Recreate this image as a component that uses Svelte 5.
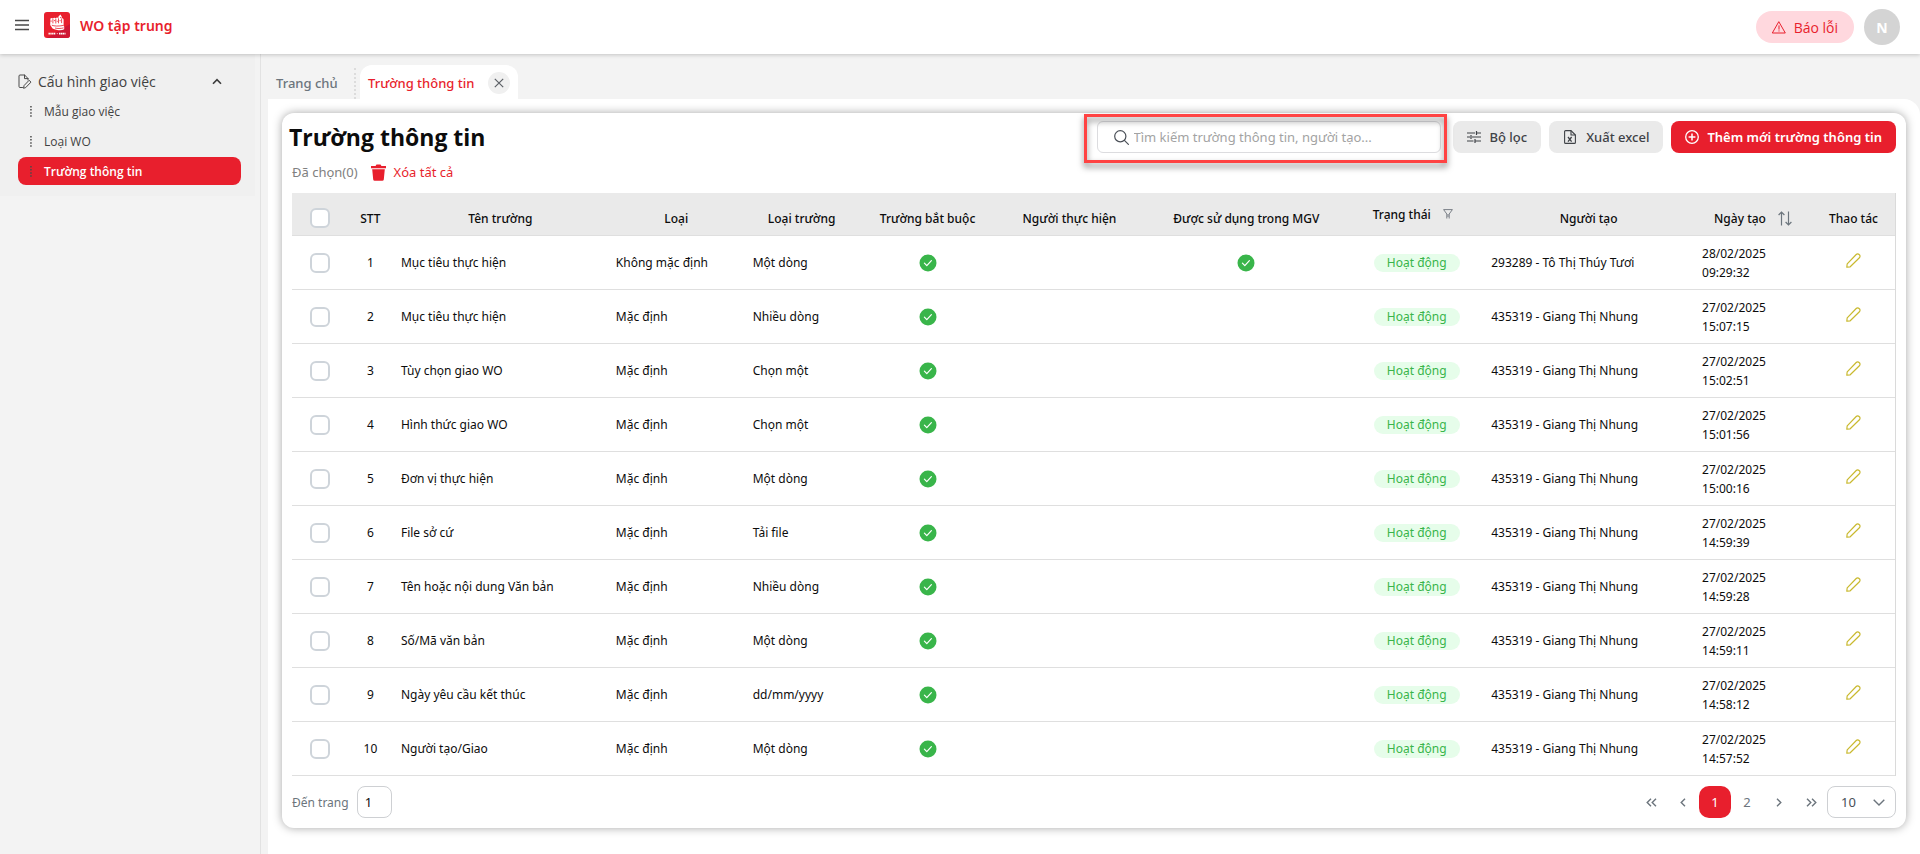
<script>
  const menu = [
    { label: 'Mẫu giao việc', active: false },
    { label: 'Loại WO', active: false },
    { label: 'Trường thông tin', active: true }
  ];

  const columns = [
    { key: 'check', label: '', width: 56 },
    { key: 'no', label: 'STT', width: 45 },
    { key: 'name', label: 'Tên trường', width: 215 },
    { key: 'kind', label: 'Loại', width: 137 },
    { key: 'type', label: 'Loại trường', width: 114 },
    { key: 'required', label: 'Trường bắt buộc', width: 138 },
    { key: 'performer', label: 'Người thực hiện', width: 146 },
    { key: 'used', label: 'Được sử dụng trong MGV', width: 208 },
    { key: 'status', label: 'Trạng thái', width: 133 },
    { key: 'creator', label: 'Người tạo', width: 211 },
    { key: 'created', label: 'Ngày tạo', width: 118 },
    { key: 'action', label: 'Thao tác', width: 83 }
  ];
  const total = columns.reduce((sum, c) => sum + c.width, 0);

  const nhung = '435319 - Giang Thị Nhung';
  const rows = [
    ['Mục tiêu thực hiện', 'Không mặc định', 'Một dòng', '293289 - Tô Thị Thúy Tươi', '28/02/2025', '09:29:32', true],
    ['Mục tiêu thực hiện', 'Mặc định', 'Nhiều dòng', nhung, '27/02/2025', '15:07:15', false],
    ['Tùy chọn giao WO', 'Mặc định', 'Chọn một', nhung, '27/02/2025', '15:02:51', false],
    ['Hình thức giao WO', 'Mặc định', 'Chọn một', nhung, '27/02/2025', '15:01:56', false],
    ['Đơn vị thực hiện', 'Mặc định', 'Một dòng', nhung, '27/02/2025', '15:00:16', false],
    ['File sở cứ', 'Mặc định', 'Tải file', nhung, '27/02/2025', '14:59:39', false],
    ['Tên hoặc nội dung Văn bản', 'Mặc định', 'Nhiều dòng', nhung, '27/02/2025', '14:59:28', false],
    ['Số/Mã văn bản', 'Mặc định', 'Một dòng', nhung, '27/02/2025', '14:59:11', false],
    ['Ngày yêu cầu kết thúc', 'Mặc định', 'dd/mm/yyyy', nhung, '27/02/2025', '14:58:12', false],
    ['Người tạo/Giao', 'Mặc định', 'Một dòng', nhung, '27/02/2025', '14:57:52', false]
  ].map(([name, kind, type, creator, date, time, used], i) => ({ no: i + 1, name, kind, type, creator, date, time, used }));

  let search = $state('');
  let page = $state('1');
  let size = $state('10');
</script>

{#snippet tick()}
  <svg class="tick" viewBox="0 0 18 18" width="18" height="18" role="img" aria-label="Có">
    <circle cx="9" cy="9" r="8.5" fill="#39b54a" />
    <path d="M5.4 9.2l2.4 2.4 4.6-5" fill="none" stroke="#fff" stroke-width="1.2" stroke-linecap="round" stroke-linejoin="round" />
  </svg>
{/snippet}

<header class="topbar">
  <button class="plain burger" aria-label="Menu">
    <svg viewBox="0 0 14 12" width="14" height="12"><path d="M0 1.5h14M0 6h14M0 10.5h14" stroke="#4a4a4a" stroke-width="1.3" /></svg>
  </button>
  <svg class="logo" viewBox="0 0 26 26" width="26" height="26" aria-hidden="true">
    <rect width="26" height="26" rx="3" fill="#e81f2d" />
    <path d="M26 12v11a3 3 0 0 1-3 3H3z" fill="#cf1633" />
    <path d="M6.400 6.600c.8-1 2-.8 2.500-.2.6-1 2.200-1 2.800-.1.700-1 2-.9 2.600-.2l.2-1.600L16.400 2.600l1.300 1.900v1.700c1-.2 1.900.4 1.900 1.500v6.100l.6.900v2.500c-1.800 1-4.400 1.300-7 .7-2.800-.3-4.700-.9-5.300-2.300L6.200 13z" fill="#fff" />
    <path d="M8.900 6.800v4.600M11.800 6.600v4.900M14.500 6.300v5M17.600 6.500v4.600M6.400 9.100h1.400M10 8.600h1.200M12.800 9.300h1M16 5.600h1M15.500 8.700h1.200M7.800 13.200c2.400 1 6.600 1.200 11.800.2M11 16c2.600.7 5.300.7 8.600-.1" fill="none" stroke="#e81f2d" stroke-width=".8" />
    <path d="M4.500 21.600h7.200M15 21.600h6.500" stroke="#fff" stroke-width="1.600" stroke-dasharray="1.400 .4" />
    <path d="M12.800 21.600h1" stroke="#fff" stroke-width=".8" />
  </svg>
  <span class="brand">WO tập trung</span>
  <button class="report">
    <svg viewBox="0 0 14 13" width="14" height="13" fill="none" stroke="#e81f2d" stroke-linejoin="round" stroke-linecap="round"><path d="M7 1L13.3 12H.7z" /><path d="M7 4.8v3.4M7 9.8v.3" /></svg>
    Báo lỗi
  </button>
  <span class="avatar">N</span>
</header>

<div class="shell">
  <nav class="sidebar">
    <div class="group">
      <button class="plain group-title">
        <svg viewBox="0 0 14 15" width="14" height="15" fill="none" stroke="#4a4a4a" stroke-linejoin="round" stroke-linecap="round"><path d="M4.500 13.500H2a1 1 0 0 1-1-1V2a1 1 0 0 1 1-1h4.600L10 4.500V6" /><path d="M6.500 1v3.600H10" /><path d="M5.600 13.900l.5-2.400 5-5.200 1.900 1.800-5 5.200z" /></svg>
        <span>Cấu hình giao việc</span>
        <svg viewBox="0 0 10 7" width="10" height="7" fill="none" stroke="#3c3c3c" stroke-width="1.6"><path d="M1 5.800L5 1.600l4 4.200" /></svg>
      </button>
      <ul>
        {#each menu as item}
          <li>
            <a href="#menu" class:active={item.active}>
              <svg viewBox="0 0 2 11" width="2" height="11" fill="#4a4a4a"><path d="M.2 0h1.500v1.500H.2zM.2 3.100h1.500v1.500H.2zM.2 6.200h1.500v1.500H.2zM.2 9.300h1.500v1.500H.2z" /></svg>
              <span>{item.label}</span>
            </a>
          </li>
        {/each}
      </ul>
    </div>
  </nav>

  <div class="main">
    <div class="tabs">
      <a class="tab home" href="#home">Trang chủ</a>
      <div class="tab current">
        <a href="#fields">Trường thông tin</a>
        <button class="plain close" aria-label="Đóng">
          <svg viewBox="0 0 10 10" width="10" height="10"><path d="M.8.8l8.400 8.400M9.200.8L.8 9.200" stroke="#5c6066" stroke-width="1.200" /></svg>
        </button>
      </div>
    </div>

    <main class="content">
      <section class="card">
        <div class="head">
          <h1>Trường thông tin</h1>
          <div class="actions">
            <div class="search">
              <label for="search" aria-label="Tìm kiếm">
                <svg viewBox="0 0 15 15" width="15" height="15" fill="none" stroke="#4a4f57" stroke-width="1.200" stroke-linecap="round"><circle cx="6.300" cy="6.300" r="5.600" /><path d="M10.400 10.400l4 4" /></svg>
              </label>
              <input id="search" type="text" placeholder="Tìm kiếm trường thông tin, người tạo..." bind:value={search} />
              <div class="mark"></div>
            </div>
            <button class="btn">
              <svg viewBox="0 0 14 12" width="14" height="12" fill="none" stroke="#3f4247" stroke-width="1.200"><path d="M0 2h8M10 2h4M0 6h3M5 6h9M0 10h6.500M8.500 10h5.500M9.500 0v4M4 4v4M8 8v4" /></svg>
              Bộ lọc
            </button>
            <button class="btn">
              <svg viewBox="-1 0 14 14" width="14" height="14" fill="none" stroke="#3f4247" stroke-width="1.100" stroke-linejoin="round"><path d="M1.600.6h5.400l4.400 4.400v7.400a1 1 0 0 1-1 1H1.600a1 1 0 0 1-1-1V1.600a1 1 0 0 1 1-1z" /><path d="M7 .6V5h4.400" /><path d="M4 7l3.600 4.600M7.600 7L4 11.600" stroke-width="1.300" /></svg>
              Xuất excel
            </button>
            <button class="btn primary">
              <svg viewBox="0 0 14 14" width="14" height="14" fill="none" stroke="#fff" stroke-width="1.300"><circle cx="7" cy="7" r="6.300" /><path d="M7 3.600v6.800M3.600 7h6.800" stroke-width="1.500" /></svg>
              Thêm mới trường thông tin
            </button>
          </div>
        </div>

        <div class="selection">
          <span>Đã chọn(0)</span>
          <button class="plain clear">
            <svg viewBox="0 0 15 17" width="15" height="17" fill="#e81f2d"><path d="M0 2h4.500L5.500.4h4L10.500 2H15v2.200H0z" /><path d="M1.200 5.200h12.600l-1 10.300a1.500 1.500 0 0 1-1.500 1.300H3.700a1.500 1.500 0 0 1-1.500-1.300z" /></svg>
            Xóa tất cả
          </button>
        </div>

        <table>
          <colgroup>
            {#each columns as c}<col style="width: {(c.width / total) * 100}%" />{/each}
          </colgroup>
          <thead>
            <tr>
              {#each columns as c}
                <th scope="col" class={c.key}>
                  {#if c.key === 'check'}
                    <input type="checkbox" aria-label="Chọn tất cả" />
                  {:else if c.key === 'status'}
                    <span class="with-icon">{c.label}
                      <svg viewBox="0 0 10 10" width="10" height="10" fill="none" stroke="#7a7f87" stroke-linejoin="round"><path d="M.6.6h8.800L6.200 5v4.500M.6.6L3.800 5v4.500M5 5v3" /></svg>
                    </span>
                  {:else if c.key === 'created'}
                    <span class="with-icon">{c.label}
                      <svg viewBox="0 0 14 15" width="14" height="15" fill="none" stroke="#6c757d" stroke-width="1.200"><path d="M3.500 14.500V1M.6 4L3.500 1l2.900 3M10.500.5V14M7.600 11l2.900 3 2.900-3" /></svg>
                    </span>
                  {:else}
                    {c.label}
                  {/if}
                </th>
              {/each}
            </tr>
          </thead>
          <tbody>
            {#each rows as r}
              <tr>
                <td class="mid"><input type="checkbox" aria-label="Chọn dòng {r.no}" /></td>
                <td class="mid">{r.no}</td>
                <td>{r.name}</td>
                <td>{r.kind}</td>
                <td>{r.type}</td>
                <td class="mid">{@render tick()}</td>
                <td></td>
                <td class="mid">{#if r.used}{@render tick()}{/if}</td>
                <td class="mid"><span class="badge">Hoạt động</span></td>
                <td>{r.creator}</td>
                <td>{r.date}<br />{r.time}</td>
                <td class="mid">
                  <button class="plain" aria-label="Sửa">
                    <svg viewBox="0 0 15 15" width="15" height="15" fill="none" stroke="#c9b92f" stroke-width="1.200" stroke-linejoin="round"><path d="M.8 14.200l.4-3.400 9-9.300a2 2 0 0 1 2.900 0l.3.300a2 2 0 0 1 0 2.900l-9.200 9.100z" /></svg>
                  </button>
                </td>
              </tr>
            {/each}
          </tbody>
        </table>

        <div class="foot">
          <label for="page">Đến trang</label>
          <input id="page" type="text" bind:value={page} />
          <div class="pager">
            <button class="plain" aria-label="Trang đầu"><svg viewBox="0 0 11 9" width="11" height="9"><path d="M5 .7L1.200 4.500 5 8.300M10 .7L6.200 4.500 10 8.300" /></svg></button>
            <button class="plain" aria-label="Trang trước"><svg viewBox="0 0 6 9" width="6" height="9"><path d="M5 .7L1.200 4.500 5 8.300" /></svg></button>
            <button class="plain on">1</button>
            <button class="plain">2</button>
            <button class="plain" aria-label="Trang sau"><svg viewBox="0 0 6 9" width="6" height="9"><path d="M1 .7l3.800 3.800L1 8.300" /></svg></button>
            <button class="plain" aria-label="Trang cuối"><svg viewBox="0 0 11 9" width="11" height="9"><path d="M1 .7l3.800 3.800L1 8.300M6 .7l3.800 3.800L6 8.300" /></svg></button>
          </div>
          <div class="size">
            <select aria-label="Số dòng mỗi trang" bind:value={size}>
              <option>10</option>
              <option>20</option>
            </select>
            <svg viewBox="0 0 12 7" width="12" height="7"><path d="M.7.7L6 6 11.300.7" /></svg>
          </div>
        </div>
      </section>
    </main>
  </div>
</div>

<style>
  :global(body) {
    margin: 0;
    background: #f3f3f3;
  }
  :global(#app) {
    min-height: 100vh;
    display: flex;
    flex-direction: column;
    font-family: 'Noto Sans', 'Open Sans', sans-serif;
    font-size: 13px;
    line-height: 19px;
    color: #0c0c0c;
  }
  * {
    box-sizing: border-box;
  }
  button, input, select {
    font: inherit;
    color: inherit;
    margin: 0;
  }
  button {
    cursor: pointer;
  }
  a {
    color: inherit;
    text-decoration: none;
  }
  svg {
    flex: none;
    display: block;
  }
  .plain {
    border: 0;
    padding: 0;
    background: none;
  }

  .topbar {
    display: flex;
    align-items: center;
    height: 54px;
    padding: 0 20px 0 15px;
    background: #fff;
    box-shadow: 0 1px 4px rgba(0, 0, 0, 0.2);
    z-index: 1;
  }
  .burger, .logo, .brand {
    margin-bottom: 4px;
  }
  .logo {
    margin-left: 15px;
  }
  .brand {
    margin-left: 10px;
    font-size: 14px;
    font-weight: 600;
    color: #e81f2d;
  }
  .report {
    display: flex;
    align-items: center;
    gap: 8px;
    height: 32px;
    margin-left: auto;
    padding: 0 16px;
    border: 0;
    border-radius: 16px;
    background: #ffd8de;
    color: #e81f2d;
    font-family: 'Open Sans', sans-serif;
    font-size: 14px;
  }
  .avatar {
    display: grid;
    place-items: center;
    width: 36px;
    height: 36px;
    margin-left: 10px;
    border-radius: 50%;
    background: #d4d4d4;
    color: #fff;
    font-size: 14px;
    font-weight: 700;
  }

  .shell {
    flex: 1;
    display: flex;
  }
  .sidebar {
    flex: 0 0 261px;
    padding-right: 5px;
    border-right: 1px solid #e2e2e2;
    font-family: 'Open Sans', sans-serif;
  }
  .group {
    padding: 17px 14px 11px 18px;
    background: #f0f0f0;
    color: #414141;
  }
  .group-title {
    display: flex;
    align-items: center;
    gap: 6px;
    width: 100%;
    height: 20px;
    padding-right: 19px;
    font-size: 14px;
    font-weight: 500;
  }
  .group-title span {
    flex: 1;
    text-align: left;
  }
  ul {
    display: grid;
    gap: 2px;
    margin: 6px 0 0;
    padding: 0;
    list-style: none;
  }
  li a {
    display: flex;
    align-items: center;
    gap: 12px;
    height: 28px;
    padding-left: 12px;
    border-radius: 8px;
    font-size: 12px;
    font-weight: 500;
  }
  li .active {
    background: #e81f2d;
    font-weight: 600;
  }
  .active span {
    color: #fff;
  }

  .main {
    flex: 1;
    min-width: 0;
    display: flex;
    flex-direction: column;
    padding-left: 7px;
  }
  .tabs {
    display: flex;
    align-items: flex-end;
    height: 45px;
    padding-left: 8px;
  }
  .tab {
    display: flex;
    align-items: center;
    height: 34px;
    font-size: 13px;
    font-weight: 500;
  }
  .home {
    width: 80px;
    height: 31px;
    margin-right: 4px;
    border-right: 2px dotted #dcdcdc;
    color: #6c757d;
  }
  .current {
    gap: 14px;
    padding: 2px 8px 0;
    border-radius: 12px 12px 0 0;
    background: #fff;
    color: #e81f2d;
  }
  .close {
    display: grid;
    place-items: center;
    width: 22px;
    height: 22px;
    border-radius: 50%;
    background: #f0f0f0;
  }

  .content {
    flex: 1;
    padding: 14px 14px 26px;
    border-top-right-radius: 16px;
    background: #fff;
  }
  .card {
    padding: 8px 10px 10px;
    border-radius: 12px;
    background: #fff;
    box-shadow: 0 0 10px rgba(0, 0, 0, 0.35);
  }
  .head {
    display: flex;
    align-items: center;
    justify-content: space-between;
    height: 32px;
  }
  h1 {
    margin: 0 0 0 -3px;
    font-family: 'Open Sans', sans-serif;
    font-size: 23px;
    line-height: 30px;
    font-weight: 700;
  }
  .actions {
    display: flex;
    gap: 8px;
  }
  .search {
    position: relative;
    display: flex;
    align-items: center;
    gap: 5px;
    width: 344px;
    height: 32px;
    margin-right: 4px;
    padding: 0 16px;
    border: 1px solid #dcdcdf;
    border-radius: 6px;
  }
  .search input {
    flex: 1;
    min-width: 0;
    padding: 0;
    border: 0;
    outline: 0;
    background: none;
  }
  .search input::placeholder {
    color: #a3a3a3;
  }
  .mark {
    position: absolute;
    inset: -8px -7px -11px -14px;
    border: 3px solid #ff4343;
    filter: drop-shadow(0 4px 3px rgba(0, 0, 0, 0.5));
    pointer-events: none;
  }
  .btn {
    display: flex;
    align-items: center;
    gap: 9px;
    height: 32px;
    padding: 0 14px;
    border: 0;
    border-radius: 8px;
    background: #eaeaea;
    color: #3f4247;
    font-weight: 500;
    white-space: nowrap;
  }
  .primary {
    gap: 8px;
    background: #e81f2d;
    color: #fff;
    font-weight: 600;
  }
  .selection {
    display: flex;
    align-items: center;
    gap: 13px;
    height: 20px;
    margin: 9px 0 11px;
    color: #808080;
  }
  .clear {
    display: flex;
    align-items: center;
    gap: 8px;
    color: #e81f2d;
  }

  table {
    width: 100%;
    table-layout: fixed;
    border-collapse: separate;
    border-spacing: 0;
    border-right: 1px solid #dadada;
    font-size: 12px;
  }
  th, td {
    padding: 0 8px;
    border-bottom: 1px solid #dfdfdf;
    text-align: left;
    white-space: nowrap;
  }
  th {
    height: 43px;
    padding: 8px 0 0;
    background: #eaeaea;
    font-weight: 500;
    text-align: center;
  }
  th.status {
    padding: 0 8px 0 0;
  }
  td {
    height: 54px;
  }
  td.mid {
    padding: 0;
    text-align: center;
  }
  .with-icon {
    display: inline-flex;
    align-items: center;
    gap: 12px;
  }
  .mid svg {
    margin: 0 auto;
  }
  input[type='checkbox'] {
    appearance: none;
    display: block;
    width: 20px;
    height: 20px;
    margin: 0 auto;
    border: 2px solid #ced4da;
    border-radius: 6px;
    background: #fff;
  }
  .badge {
    display: inline-block;
    padding: 0 13px;
    border-radius: 9px;
    background: #e6fdea;
    color: #39b54a;
    line-height: 18px;
  }

  .foot {
    display: flex;
    align-items: center;
    height: 32px;
    margin-top: 10px;
    color: #6c757d;
  }
  .foot label {
    font-size: 12px;
  }
  #page {
    width: 35px;
    height: 32px;
    margin-left: 8px;
    padding: 0 7px;
    border: 1px solid #ced0d3;
    border-radius: 8px;
    color: #0c0c0c;
  }
  .pager {
    display: flex;
    margin-left: auto;
  }
  .pager button {
    display: grid;
    place-items: center;
    width: 32px;
    height: 32px;
    border-radius: 10px;
  }
  .pager .on {
    background: #e81f2d;
    color: #fff;
  }
  .pager svg, .size svg {
    fill: none;
    stroke: #6c757d;
    stroke-width: 1.4;
  }
  .size {
    position: relative;
  }
  .size select {
    appearance: none;
    width: 69px;
    height: 32px;
    padding: 0 13px;
    border: 1px solid #ced0d3;
    border-radius: 8px;
    background: #fff;
    color: #495057;
  }
  .size svg {
    position: absolute;
    top: 13px;
    right: 11px;
    pointer-events: none;
  }
</style>
